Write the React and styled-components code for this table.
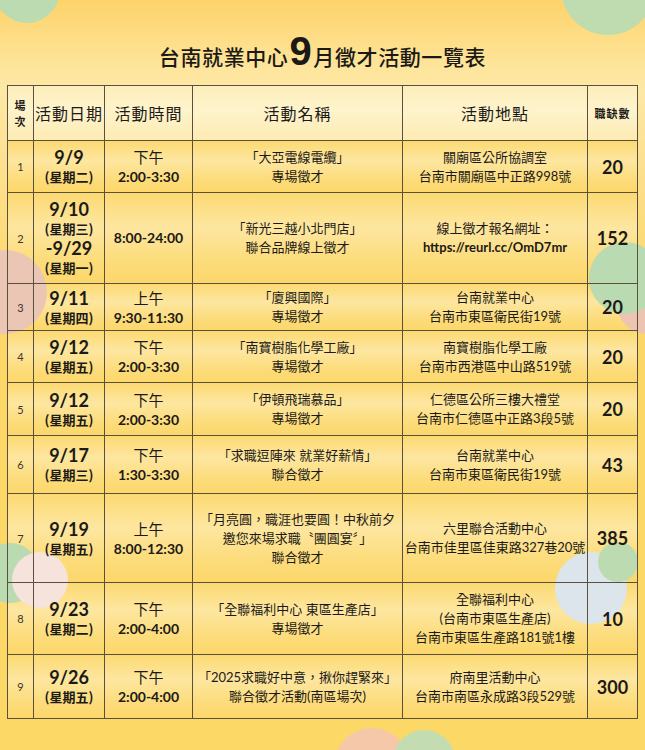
import styled, { createGlobalStyle } from 'styled-components';

const GlobalStyle = createGlobalStyle`
  body {
    margin: 0;
    font-family: "Lato", "Noto Sans CJK TC", sans-serif;
    color: #1c1a16;
  }
`

const COLS = '27px 71px 88px 210px 185px 50px'
const LINE = '#5a5040'

const Page = styled.div`
  position: relative;
  z-index: 0;
  width: 645px;
  height: 750px;
  overflow: hidden;
  background: linear-gradient(180deg, #fdd36a 0%, #fee59c 9%, #fee8a6 12%, #fde090 22%, #fcd767 40%, #fcd866 100%);
`

const Circle = styled.span`
  position: absolute;
  z-index: 1;
  left: ${(p) => p.$x - p.$r}px;
  top: ${(p) => p.$y - p.$r}px;
  width: ${(p) => p.$r * 2}px;
  height: ${(p) => p.$r * 2}px;
  border-radius: 50%;
  background: ${(p) => p.$c};
`

const Title = styled.h1`
  margin: 0;
  box-sizing: border-box;
  height: 85px;
  padding-top: 31px;
  display: flex;
  justify-content: center;
  align-items: baseline;
  font-family: "Noto Sans CJK TC", sans-serif;
  font-size: 21px;
  font-weight: 500;
  line-height: 1;
  letter-spacing: 0.6px;
`

const BigNum = styled.span`
  font-family: "Liberation Sans", Arial, sans-serif;
  font-size: 40px;
  font-weight: 700;
  margin: 0 1px;
`

const Table = styled.div`
  display: flex;
  flex-direction: column;
  margin-left: 7px;
  width: 631px;
`

const Row = styled.div`
  display: grid;
  grid-template-columns: ${COLS};
  height: ${(p) => p.$h}px;
  background: ${(p) => p.$head
    ? 'linear-gradient(180deg, #fdeeba 0%, #fef3cc 45%, #fdebb2 100%)'
    : 'linear-gradient(180deg, #fcda72 0%, #fde6a0 38%, #fcdc7a 75%, #fcd76a 100%)'};
`

const Cell = styled.div`
  position: relative;
  z-index: 2;
  box-sizing: border-box;
  display: flex;
  flex-direction: column;
  align-items: center;
  justify-content: center;
  text-align: center;
  border-right: 1px solid ${LINE};
  border-bottom: 1px solid ${LINE};
  border-top: ${(p) => (p.$top ? `1px solid ${LINE}` : 'none')};
  &:first-child {
    border-left: 1px solid ${LINE};
  }
  white-space: nowrap;
`

const HeadText = styled.span`
  font-family: "Noto Sans CJK TC", sans-serif;
  font-size: ${(p) => (p.$small ? 11 : 16)}px;
  font-weight: ${(p) => (p.$small ? 700 : 400)};
  line-height: ${(p) => (p.$small ? 16 : 22)}px;
  letter-spacing: 1px;
`

const No = styled.span`
  font-size: 11px;
  color: #3a3630;
`

const DateGroup = styled.div`
  display: flex;
  flex-direction: column;
  align-items: center;
`

const DateMain = styled.span`
  font-size: 18px;
  font-weight: 700;
  line-height: 20px;
`

const DateSub = styled.span`
  font-family: "Noto Sans CJK TC", sans-serif;
  font-size: 13px;
  font-weight: 700;
  line-height: 19px;
`

const Period = styled.span`
  font-family: "Noto Sans CJK TC", sans-serif;
  font-size: 15px;
  line-height: 21px;
`

const Time = styled.span`
  font-size: 14px;
  font-weight: 700;
  line-height: 20px;
`

const Line = styled.span`
  font-family: "Lato", "Noto Sans CJK TC", sans-serif;
  font-size: 13px;
  line-height: 19px;
  font-weight: ${(p) => (p.$bold ? 700 : 400)};
`

const Count = styled.span`
  font-size: 18px;
  font-weight: 700;
`

const events = [
  { h: 52, dates: [['9/9', '(星期二)']], period: '下午', time: '2:00-3:30', name: ['「大亞電線電纜」', '專場徵才'], place: ['關廟區公所協調室', '台南市關廟區中正路998號'], count: 20 },
  { h: 91, dates: [['9/10', '(星期三)'], ['-9/29', '(星期一)']], period: '', time: '8:00-24:00', name: ['「新光三越小北門店」', '聯合品牌線上徵才'], place: ['線上徵才報名網址：', 'https://reurl.cc/OmD7mr'], count: 152 },
  { h: 47, dates: [['9/11', '(星期四)']], period: '上午', time: '9:30-11:30', name: ['「廈興國際」', '專場徵才'], place: ['台南就業中心', '台南市東區衛民街19號'], count: 20 },
  { h: 52, dates: [['9/12', '(星期五)']], period: '下午', time: '2:00-3:30', name: ['「南寶樹脂化學工廠」', '專場徵才'], place: ['南寶樹脂化學工廠', '台南市西港區中山路519號'], count: 20 },
  { h: 53, dates: [['9/12', '(星期五)']], period: '下午', time: '2:00-3:30', name: ['「伊頓飛瑞慕品」', '專場徵才'], place: ['仁德區公所三樓大禮堂', '台南市仁德區中正路3段5號'], count: 20 },
  { h: 58, dates: [['9/17', '(星期三)']], period: '下午', time: '1:30-3:30', name: ['「求職逗陣來 就業好薪情」', '聯合徵才'], place: ['台南就業中心', '台南市東區衛民街19號'], count: 43 },
  { h: 89, dates: [['9/19', '(星期五)']], period: '上午', time: '8:00-12:30', name: ['「月亮圓，職涯也要圓！中秋前夕', '邀您來場求職〝團圓宴〞」', '聯合徵才'], place: ['六里聯合活動中心', '台南市佳里區佳東路327巷20號'], count: 385 },
  { h: 72, dates: [['9/23', '(星期二)']], period: '下午', time: '2:00-4:00', name: ['「全聯福利中心 東區生產店」', '專場徵才'], place: ['全聯福利中心', '(台南市東區生產店)', '台南市東區生產路181號1樓'], count: 10 },
  { h: 64, dates: [['9/26', '(星期五)']], period: '下午', time: '2:00-4:00', name: ['「2025求職好中意，揪你趕緊來」', '聯合徵才活動(南區場次)'], place: ['府南里活動中心', '台南市南區永成路3段529號'], count: 300 },
]

const circles = [
  { x: 27, y: -10, r: 33, c: '#bddbb1' },
  { x: 608, y: -12, r: 47, c: '#bfdcb1' },
  { x: 5, y: 292, r: 42, c: '#ecc6b4' },
  { x: 648, y: 302, r: 32, c: '#edc4b2' },
  { x: 625, y: 278, r: 36, c: '#badab1' },
  { x: 10, y: 573, r: 30, c: '#badbb1' },
  { x: 40, y: 580, r: 28, c: '#f6e3dc' },
  { x: 591, y: 588, r: 36, c: '#dce5ec' },
  { x: 618, y: 562, r: 20, c: '#bddbb1' },
  { x: 372, y: 766, r: 38, c: '#f5c8a9' },
  { x: 424, y: 761, r: 31, c: '#c4dcb2' },
]

export default function App() {
  return (
    <Page>
      <GlobalStyle />
      {circles.map((c, i) => (
        <Circle key={i} $x={c.x} $y={c.y} $r={c.r} $c={c.c} />
      ))}
      <Title>
        台南就業中心<BigNum>9</BigNum>月徵才活動一覽表
      </Title>
      <Table>
        <Row $h={56} $head>
          <Cell $top>
            <HeadText $small>場</HeadText>
            <HeadText $small>次</HeadText>
          </Cell>
          <Cell $top><HeadText>活動日期</HeadText></Cell>
          <Cell $top><HeadText>活動時間</HeadText></Cell>
          <Cell $top><HeadText>活動名稱</HeadText></Cell>
          <Cell $top><HeadText>活動地點</HeadText></Cell>
          <Cell $top><HeadText $small>職缺數</HeadText></Cell>
        </Row>
        {events.map((ev, i) => (
          <Row key={i} $h={ev.h}>
            <Cell><No>{i + 1}</No></Cell>
            <Cell>
              {ev.dates.map(([d, w]) => (
                <DateGroup key={d}>
                  <DateMain>{d}</DateMain>
                  <DateSub>{w}</DateSub>
                </DateGroup>
              ))}
            </Cell>
            <Cell>
              {ev.period && <Period>{ev.period}</Period>}
              <Time>{ev.time}</Time>
            </Cell>
            <Cell>
              {ev.name.map((t) => <Line key={t}>{t}</Line>)}
            </Cell>
            <Cell>
              {ev.place.map((t) => <Line key={t} $bold={t.startsWith('http')}>{t}</Line>)}
            </Cell>
            <Cell><Count>{ev.count}</Count></Cell>
          </Row>
        ))}
      </Table>
    </Page>
  )
}
